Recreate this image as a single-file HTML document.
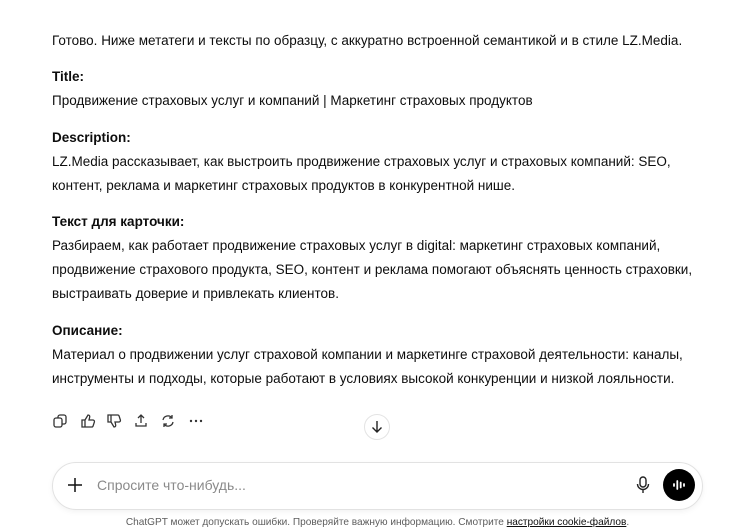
<!DOCTYPE html>
<html><head><meta charset="utf-8"><style>
body{margin:0;width:751px;height:528px;background:#fff;font-family:"Liberation Sans","DejaVu Sans",sans-serif;color:#0d0d0d;overflow:hidden;position:relative}
.t{position:absolute;left:52px;font-size:13.5px;white-space:nowrap;line-height:24px}
.b{font-weight:bold}
.ic{position:absolute;top:413px}
</style></head><body>
<div class="t" style="top:29px">Готово. Ниже метатеги и тексты по образцу, с аккуратно встроенной семантикой и в стиле LZ.Media.</div>
<div class="t b" style="top:65px">Title:</div>
<div class="t" style="top:89px">Продвижение страховых услуг и компаний | Маркетинг страховых продуктов</div>
<div class="t b" style="top:126px">Description:</div>
<div class="t" style="top:150px">LZ.Media рассказывает, как выстроить продвижение страховых услуг и страховых компаний: SEO,<br>контент, реклама и маркетинг страховых продуктов в конкурентной нише.</div>
<div class="t b" style="top:210px">Текст для карточки:</div>
<div class="t" style="top:234px">Разбираем, как работает продвижение страховых услуг в digital: маркетинг страховых компаний,<br>продвижение страхового продукта, SEO, контент и реклама помогают объяснять ценность страховки,<br>выстраивать доверие и привлекать клиентов.</div>
<div class="t b" style="top:319px">Описание:</div>
<div class="t" style="top:343px">Материал о продвижении услуг страховой компании и маркетинге страховой деятельности: каналы,<br>инструменты и подходы, которые работают в условиях высокой конкуренции и низкой лояльности.</div>

<svg class="ic" style="left:52px" width="16" height="16" viewBox="0 0 16 16" fill="none" stroke="#333" stroke-width="1.3"><rect x="2" y="5" width="8" height="9" rx="2"/><path d="M6 5V4a2 2 0 0 1 2-2h4a2 2 0 0 1 2 2v5a2 2 0 0 1-2 2h-2"/></svg>
<svg class="ic" style="left:80px" width="16" height="16" viewBox="0 0 16 16" fill="none" stroke="#333" stroke-width="1.3"><path d="M2 7h3v7H2zM5 7l3-5c1.5 0 2 1 1.6 2.5L9 7h4a1.5 1.5 0 0 1 1.4 1.9l-1.3 4A1.5 1.5 0 0 1 11.7 14H5"/></svg>
<svg class="ic" style="left:106px" width="16" height="16" viewBox="0 0 16 16" fill="none" stroke="#333" stroke-width="1.3"><path d="M2 2h3v7H2zM5 9l3 5c1.5 0 2-1 1.6-2.5L9 9h4a1.5 1.5 0 0 0 1.4-1.9l-1.3-4A1.5 1.5 0 0 0 11.7 2H5"/></svg>
<svg class="ic" style="left:133px" width="16" height="16" viewBox="0 0 16 16" fill="none" stroke="#333" stroke-width="1.3"><path d="M8 10V2M5 5l3-3 3 3M3 10v3h10v-3"/></svg>
<svg class="ic" style="left:160px" width="16" height="16" viewBox="0 0 16 16" fill="none" stroke="#333" stroke-width="1.3"><path d="M3 7a5 5 0 0 1 9-2M13 9a5 5 0 0 1-9 2M12 2v3H9M4 14v-3h3"/></svg>
<svg class="ic" style="left:188px" width="16" height="16" viewBox="0 0 16 16" fill="#333"><circle cx="3" cy="8" r="1.2"/><circle cx="8" cy="8" r="1.2"/><circle cx="13" cy="8" r="1.2"/></svg>

<div style="position:absolute;left:364px;top:414px;width:26px;height:26px;border:1px solid #e3e3e3;border-radius:50%;box-sizing:border-box"></div>
<svg style="position:absolute;left:370px;top:420px" width="14" height="14" viewBox="0 0 14 14" fill="none" stroke="#222" stroke-width="1.4"><path d="M7 1v11M2.5 7.5 7 12l4.5-4.5"/></svg>

<div style="position:absolute;left:52px;top:462px;width:651px;height:48px;border:1px solid #e2e2e2;border-radius:24px;box-sizing:border-box;box-shadow:0 2px 6px rgba(0,0,0,.05)"></div>
<svg style="position:absolute;left:67px;top:477px" width="16" height="16" viewBox="0 0 16 16" stroke="#111" stroke-width="1.5"><path d="M8 1v14M1 8h14"/></svg>
<div style="position:absolute;left:97px;top:476px;font-size:14px;color:#8a8a8a;line-height:18px">Спросите что-нибудь...</div>
<svg style="position:absolute;left:636px;top:476px" width="14" height="18" viewBox="0 0 14 18" fill="none" stroke="#222" stroke-width="1.4"><rect x="4" y="1" width="6" height="10" rx="3"/><path d="M1.5 8a5.5 5.5 0 0 0 11 0M7 13.5V17"/></svg>
<div style="position:absolute;left:663px;top:469px;width:32px;height:32px;border-radius:50%;background:#000"></div>
<svg style="position:absolute;left:671px;top:477px" width="16" height="16" viewBox="0 0 16 16" stroke="#fff" stroke-width="1.8" stroke-linecap="round"><path d="M3 7v2M6.3 4v8M9.7 5.5v5M13 7v2"/></svg>
<div style="position:absolute;left:0;width:755px;text-align:center;top:516px;font-size:10.1px;color:#5d5d5d;line-height:14px">ChatGPT может допускать ошибки. Проверяйте важную информацию. Смотрите <span style="color:#0d0d0d;text-decoration:underline">настройки cookie-файлов</span>.</div>
</body></html>
